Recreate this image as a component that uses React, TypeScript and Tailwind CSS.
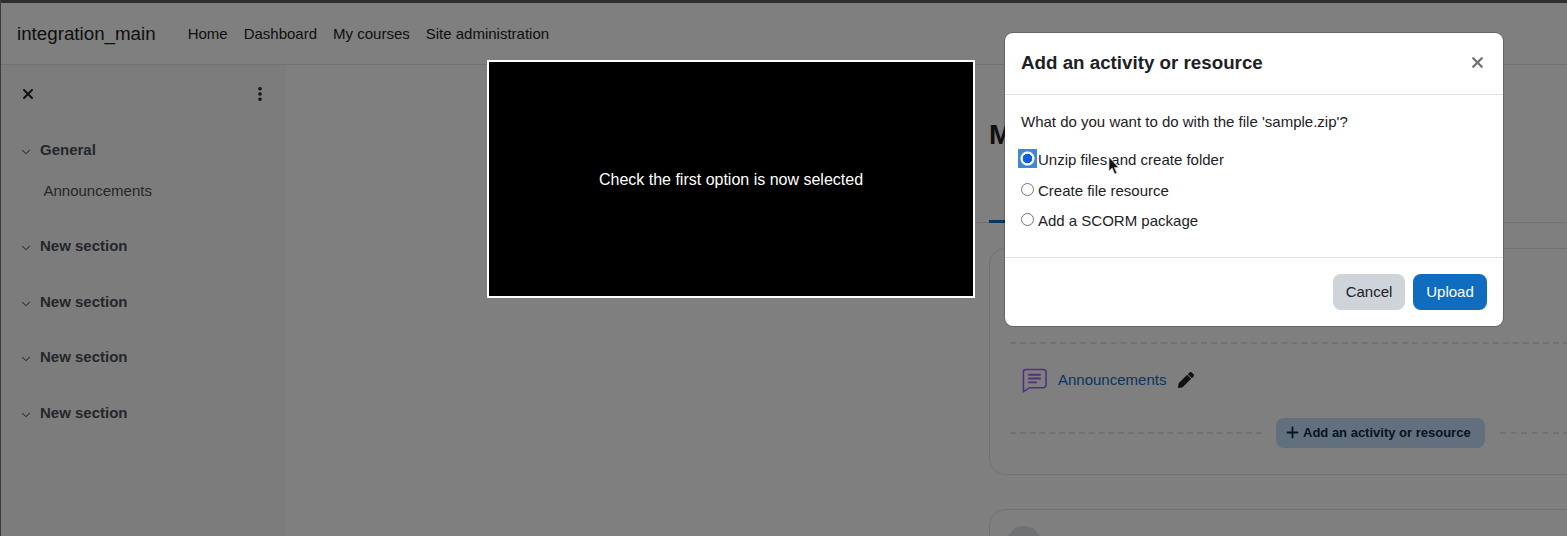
import { ChevronDown, EllipsisVertical, Plus, X } from "lucide-react";

const sections = ["New section", "New section", "New section", "New section"];
const navLinks = ["Home", "Dashboard", "My courses", "Site administration"];

function SectionTitle({ label }: { label: string }) {
	return (
		<div className="flex items-center h-[20px]">
			<ChevronDown className="text-[#1d2125] ml-[19px] mt-[3px]" size={14} strokeWidth={1.6} />
			<span className="ml-[7px] text-[15px] font-bold text-[#495057]">{label}</span>
		</div>
	);
}

function Sidebar() {
	return (
		<aside className="w-[285px] shrink-0 bg-[#f8f9fa] flex flex-col">
			<div className="flex items-center justify-between h-[20px] mt-[19px] pl-[20px] pr-[16px]">
				<X className="text-[#1d2125]" size={16} strokeWidth={3} />
				<EllipsisVertical className="text-[#1d2125]" size={18} strokeWidth={2.8} />
			</div>
			<div className="mt-[36px]">
				<SectionTitle label="General" />
				<div className="ml-[43.5px] mt-[21px] text-[15px] leading-[20px] text-[#495057]">Announcements</div>
			</div>
			<div className="mt-[35.5px] flex flex-col gap-[35.6px]">
				{sections.map((s, i) => (
					<SectionTitle key={i} label={s} />
				))}
			</div>
		</aside>
	);
}

function DashedLine({ className }: { className: string }) {
	return <div className={`border-t-2 border-dashed border-[#dee2e6] ${className}`} />;
}

function CourseContent() {
	return (
		<main className="flex-1 pl-[704px] min-w-0">
			<h1 className="text-[28px] leading-[34px] font-bold text-[#1d2125] mt-[53px] whitespace-nowrap">My course</h1>
			<div className="mt-[68px] -ml-[30px] w-[830px] h-[3px] border-b border-[#dee2e6]">
				<div className="ml-[30px] w-[16px] h-[3px] bg-[#0f6cbf]" />
			</div>
			<div className="mt-[25px] w-[800px] h-[227px] rounded-[16px] border border-[#dee2e6] pl-[20px] pt-[93px]">
				<DashedLine className="w-[760px]" />
				<div className="flex items-center h-[72px] pl-[12px]">
					<svg width="25" height="26" viewBox="0 0 26 26" fill="none" stroke="#a060ff" strokeWidth="1.6">
						<path d="M4 2h18a3 3 0 0 1 3 3v13a3 3 0 0 1-3 3H8l-6.500 4V4.500A2.500 2.500 0 0 1 4 2z" />
						<path d="M6.500 7.500h13M6.500 11.500h13M6.500 15.500h9" strokeWidth="2" />
					</svg>
					<span className="ml-[11px] text-[15px] text-[#0f6cbf]">Announcements</span>
					<svg className="ml-[12px]" width="16" height="16" viewBox="0 0 512 512" fill="#1d2125">
						<path d="M497.900 142.100l-46.100 46.100c-4.700 4.700-12.300 4.700-17 0l-111-111c-4.700-4.700-4.700-12.300 0-17l46.100-46.100c18.700-18.700 49.100-18.700 67.900 0l60.100 60.100c18.800 18.700 18.800 49.100 0 67.900zM284.200 99.800L21.600 362.400.4 483.900c-2.900 16.400 11.400 30.600 27.800 27.800l121.500-21.300 262.600-262.600c4.700-4.700 4.700-12.300 0-17l-111-111c-4.800-4.700-12.400-4.700-17.100 0z" />
					</svg>
				</div>
				<div className="flex items-center mt-[2px]">
					<DashedLine className="w-[252px]" />
					<button className="ml-[14px] w-[209px] h-[30px] rounded-[8px] bg-[#c4e0fb] text-[#0b2a4a] flex items-center pl-[8px] text-[13px] font-bold">
						<Plus size={17} strokeWidth={2.6} className="mr-[2px] -mt-[2px]" />
						Add an activity or resource
					</button>
					<DashedLine className="ml-[15px] w-[80px]" />
				</div>
			</div>
			<div className="mt-[34px] w-[800px] h-[100px] rounded-[16px] border border-[#dee2e6] pl-[17px] pt-[16px]">
				<div className="w-[34px] h-[34px] rounded-full bg-[#dee2e6]" />
			</div>
		</main>
	);
}

function UploadDialog() {
	return (
		<div className="absolute left-[1005px] top-[33px] w-[498px] h-[293px] bg-white rounded-[8px] flex flex-col text-[#1d2125] shadow-[0_0_0_1px_rgba(0,0,0,0.2)]">
			<div className="h-[62px] shrink-0 border-b border-[#dee2e6] flex items-center justify-between pl-[16px] pr-[17px]">
				<h2 className="text-[18.75px] font-bold">Add an activity or resource</h2>
				<X className="text-[#6f7377] -mt-[2px]" size={17} strokeWidth={3.4} />
			</div>
			<div className="flex-1 pl-[16px] pt-[17px] text-[15px]">
				<p className="leading-[20px]">What do you want to do with the file 'sample.zip'?</p>
				<div className="mt-[18px] flex flex-col">
					<label className="flex items-center h-[20px] relative">
						<span className="absolute -left-[3px] top-[-1px] w-[19px] h-[19px] bg-[#3f88d4]" />
						<input
							type="radio"
							name="choice"
							defaultChecked
							className="relative appearance-none m-0 -ml-[1px] -mr-[1px] mt-[-3px] w-[15px] h-[15px] bg-[radial-gradient(circle,#0f5fdc_0_4.5px,#e6f0ff_5px,#ffffff_6px_6.5px,#3f88d4_7.5px)]"
						/>
						<span className="relative ml-[4px]">Unzip files and create folder</span>
					</label>
					<label className="flex items-center h-[20px] mt-[11px]">
						<input type="radio" name="choice" className="m-0 mt-[-3px] w-[13px] h-[13px]" />
						<span className="ml-[4px]">Create file resource</span>
					</label>
					<label className="flex items-center h-[20px] mt-[10px]">
						<input type="radio" name="choice" className="m-0 mt-[-3px] w-[13px] h-[13px]" />
						<span className="ml-[4px]">Add a SCORM package</span>
					</label>
				</div>
			</div>
			<div className="h-[69px] shrink-0 border-t border-[#dee2e6] flex items-center justify-end gap-[8px] pr-[16px]">
				<button className="w-[72px] h-[36px] rounded-[8px] bg-[#ced4da] text-[15px] text-[#1d2125]">Cancel</button>
				<button className="w-[74px] h-[36px] rounded-[8px] bg-[#0f6cbf] text-[15px] text-white">Upload</button>
			</div>
		</div>
	);
}

export default function App() {
	return (
		<div
			className="relative w-[1567px] h-[536px] overflow-hidden bg-white flex flex-col"
			style={{ fontFamily: '"Liberation Sans", Arial, sans-serif' }}
		>
			<header className="h-[65px] shrink-0 border-b border-[#dee2e6] flex items-center pl-[17px] pt-[5px] text-[#1d2125]">
				<span className="text-[18.75px] mr-[24px]">integration_main</span>
				<nav className="flex text-[15px]">
					{navLinks.map((l) => (
						<a key={l} className="px-[8px] whitespace-nowrap" href="#">
							{l}
						</a>
					))}
				</nav>
			</header>
			<div className="flex flex-1 min-h-0">
				<Sidebar />
				<CourseContent />
			</div>

			{/* backdrop and everything that sits on it */}
			<div className="absolute inset-0 bg-[rgba(0,0,0,0.5)]" />
			<div className="absolute left-0 top-0 w-full h-[3px] bg-[#2e2e2e]" />
			<div className="absolute left-0 top-0 h-full w-px bg-[#3c3c3c]" />
			<div className="absolute left-[487px] top-[60px] w-[488px] h-[238px] bg-black border-2 border-white flex items-center justify-center pt-[2px] text-white text-[16px]">
				Check the first option is now selected
			</div>
			<UploadDialog />
			<svg className="absolute left-[1108px] top-[156px]" width="12" height="20" viewBox="0 0 12 20">
				<path d="M1 1v14l3.200-3 2.500 6 2.200-1-2.500-5.500H10.500z" fill="#111" stroke="#ccc" strokeWidth="0.8" />
			</svg>
		</div>
	);
}
